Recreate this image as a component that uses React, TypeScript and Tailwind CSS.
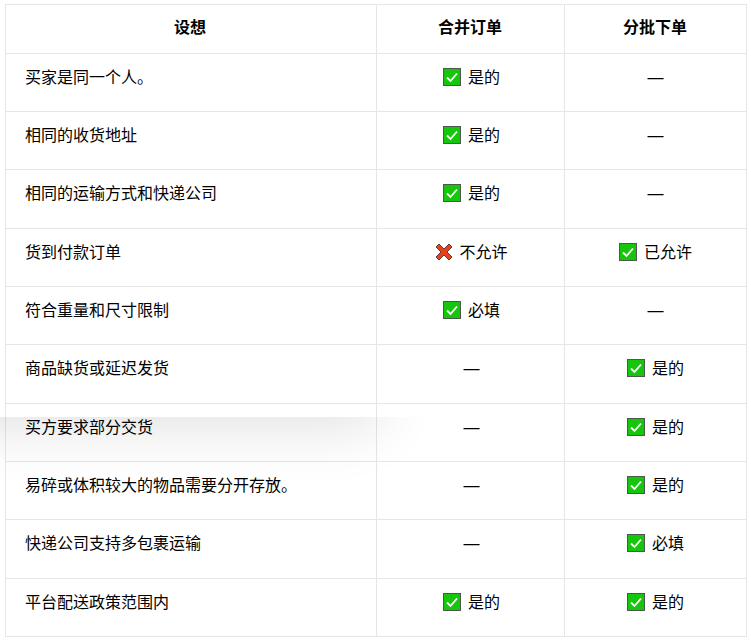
const rows: [string, string, string][] = [
  ['买家是同一个人。', 'y:是的', '—'],
  ['相同的收货地址', 'y:是的', '—'],
  ['相同的运输方式和快递公司', 'y:是的', '—'],
  ['货到付款订单', 'n:不允许', 'y:已允许'],
  ['符合重量和尺寸限制', 'y:必填', '—'],
  ['商品缺货或延迟发货', '—', 'y:是的'],
  ['买方要求部分交货', '—', 'y:是的'],
  ['易碎或体积较大的物品需要分开存放。', '—', 'y:是的'],
  ['快递公司支持多包裹运输', '—', 'y:必填'],
  ['平台配送政策范围内', 'y:是的', 'y:是的'],
];

function CheckIcon() {
  return (
    <svg width="18" height="18" viewBox="0 0 18 18" className="mt-[4px] shrink-0">
      <rect x="0.5" y="0.5" width="17" height="17" fill="#16c60c" stroke="#4a5a4a" />
      <path d="M4 9.5 L7.5 13 L14 5.5" fill="none" stroke="#fff" strokeWidth="1.8" />
    </svg>
  );
}

function CrossIcon() {
  return (
    <svg width="18" height="18" viewBox="0 0 18 18" className="mt-[4px] shrink-0">
      <path
        d="M4 1 L9 6 L14 1 L17 4 L12 9 L17 14 L14 17 L9 12 L4 17 L1 14 L6 9 L1 4 Z"
        fill="#e8401c"
        stroke="#5a4038"
        strokeWidth="1"
      />
    </svg>
  );
}

function Cell({ value }: { value: string }) {
  if (value === '—') return <span className="font-['Liberation_Sans',sans-serif]">—</span>;
  const [kind, label] = value.split(':');
  if (kind === 'n') {
    return (
      <span className="inline-flex items-start gap-[6px] align-top">
        <CrossIcon />
        <span>{label}</span>
      </span>
    );
  }
  return (
    <span className="inline-flex items-start gap-[7px] align-top">
      <CheckIcon />
      <span>{label}</span>
    </span>
  );
}

export default function App() {
  return (
    <div className="relative h-[643px] w-[751px] overflow-hidden bg-white pl-[5px] pt-[4px] font-['Noto_Sans_CJK_SC',sans-serif] text-[16px] leading-[24px] text-black">
      <table className="w-[741px] table-fixed border-collapse">
        <colgroup>
          <col className="w-[371px]" />
          <col className="w-[188px]" />
          <col className="w-[182px]" />
        </colgroup>
        <thead>
          <tr className="h-[48.67px]">
            <th className="border border-[#e5e5ea] pb-[5px] pr-[2px] text-center font-bold">设想</th>
            <th className="border border-[#e5e5ea] pb-[5px] pr-[1px] text-center font-bold">合并订单</th>
            <th className="border border-[#e5e5ea] pb-[5px] pr-[1px] text-center font-bold">分批下单</th>
          </tr>
        </thead>
        <tbody>
          {rows.map((r) => (
            <tr key={r[0]} className="h-[58.33px]">
              <td className="border border-[#e5e5ea] pl-[19px] pr-[20px] pt-[10px] align-top">{r[0]}</td>
              <td className="border border-[#e5e5ea] pl-[2px] pt-[10px] text-center align-top"><Cell value={r[1]} /></td>
              <td className="border border-[#e5e5ea] pt-[10px] text-center align-top"><Cell value={r[2]} /></td>
            </tr>
          ))}
        </tbody>
      </table>
      <div className="pointer-events-none absolute left-0 top-[417px] h-[110px] w-[520px] overflow-hidden">
        <div className="absolute left-[-80px] top-[-100px] h-[100px] w-[460px] rounded-br-[14px] shadow-[0_10px_60px_rgba(0,0,0,0.12)]" />
      </div>
    </div>
  );
}
